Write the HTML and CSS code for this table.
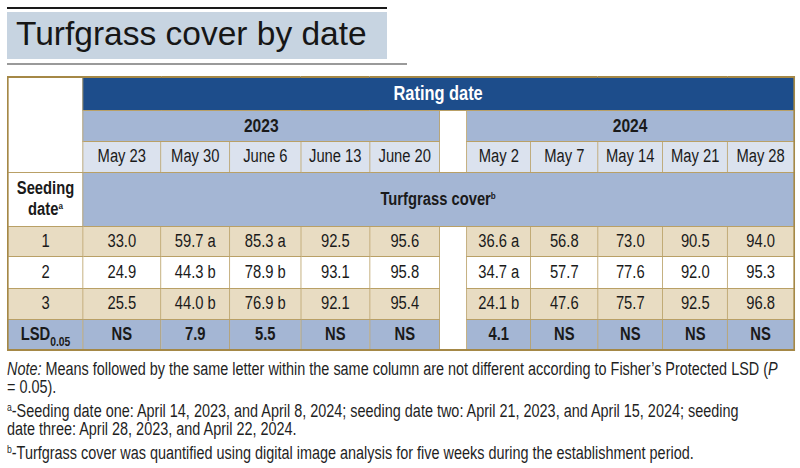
FILE: index.html
```html
<!DOCTYPE html>
<html lang="en">
<head>
<meta charset="utf-8">
<title>Turfgrass cover by date</title>
<link rel="stylesheet" href="styles.css">
</head>
<body>
<div class="page">
  <div class="rule-top"></div>
  <h1 class="title">Turfgrass cover by date</h1>
  <div class="rule-under"></div>

  <div class="narrow">
    <table class="data">
      <colgroup>
        <col class="c-label">
        <col class="c78"><col class="c69"><col class="c71"><col class="c69"><col class="c70">
        <col class="c-gap">
        <col class="c64"><col class="c67"><col class="c65"><col class="c65"><col class="c66">
      </colgroup>
      <tr class="r-rating">
        <td class="blank" rowspan="3"></td>
        <th class="rating" colspan="11">Rating date</th>
      </tr>
      <tr class="r-year">
        <th class="year" colspan="5">2023</th>
        <td class="gap" rowspan="2"></td>
        <th class="year" colspan="5">2024</th>
      </tr>
      <tr class="r-dates">
        <td>May 23</td><td>May 30</td><td>June 6</td><td>June 13</td><td>June 20</td>
        <td>May 2</td><td>May 7</td><td>May 14</td><td>May 21</td><td>May 28</td>
      </tr>
      <tr class="r-cover">
        <th class="seed">Seeding<br>date<sup>a</sup></th>
        <th class="cover" colspan="11">Turfgrass cover<sup>b</sup></th>
      </tr>
      <tr class="r-beige">
        <td>1</td><td>33.0</td><td>59.7 a</td><td>85.3 a</td><td>92.5</td><td>95.6</td>
        <td class="gap" rowspan="4"></td>
        <td>36.6 a</td><td>56.8</td><td>73.0</td><td>90.5</td><td>94.0</td>
      </tr>
      <tr class="r-white">
        <td>2</td><td>24.9</td><td>44.3 b</td><td>78.9 b</td><td>93.1</td><td>95.8</td>
        <td>34.7 a</td><td>57.7</td><td>77.6</td><td>92.0</td><td>95.3</td>
      </tr>
      <tr class="r-beige r-3">
        <td>3</td><td>25.5</td><td>44.0 b</td><td>76.9 b</td><td>92.1</td><td>95.4</td>
        <td>24.1 b</td><td>47.6</td><td>75.7</td><td>92.5</td><td>96.8</td>
      </tr>
      <tr class="r-lsd">
        <th>LSD<sub>0.05</sub></th><th>NS</th><th>7.9</th><th>5.5</th><th>NS</th><th>NS</th>
        <th>4.1</th><th>NS</th><th>NS</th><th>NS</th><th>NS</th>
      </tr>
    </table>

    <div class="notes">
      <p><em>Note:</em> Means followed by the same letter within the same column are not different according to Fisher’s Protected LSD (<em>P</em><br>= 0.05).</p>
      <p><sup>a</sup>-Seeding date one: April 14, 2023, and April 8, 2024; seeding date two: April 21, 2023, and April 15, 2024; seeding<br>date three: April 28, 2023, and April 22, 2024.</p>
      <p><sup>b</sup>-Turfgrass cover was quantified using digital image analysis for five weeks during the establishment period.</p>
    </div>
  </div>
</div>
</body>
</html>
```

FILE: styles.css
```css
* { box-sizing: border-box; }
html, body { margin: 0; padding: 0; background: #ffffff; overflow: hidden; }

.page {
  padding: 7px 0 0 7px;
  font-family: "Liberation Sans", Arial, sans-serif;
  color: #1c1c1c;
}

.rule-top {
  width: 380px;
  height: 2px;
  background: #1a1a1a;
}

.title {
  margin: 3px 0 0 0;
  width: 380px;
  height: 47px;
  padding: 0 0 4px 9px;
  background: #c7d4e1;
  font-weight: normal;
  font-size: 33.5px;
  line-height: 43px;
  color: #161616;
  letter-spacing: 0;
}

.rule-under {
  margin-top: 4px;
  width: 400px;
  height: 2px;
  background: #9a9a9a;
}

/* Arial-Narrow look: Liberation Sans squeezed horizontally */
.narrow {
  width: 958.5px;
  transform: scaleX(0.82);
  transform-origin: 0 0;
}

.data {
  margin-top: 11px;
  width: 958.5px;
  table-layout: fixed;
  border-collapse: collapse;
  border: 2px solid #a58846;
  font-size: 18px;
}

.c-label { width: 91.46px; }
.c78 { width: 95.12px; }
.c69 { width: 84.15px; }
.c71 { width: 86.59px; }
.c70 { width: 85.37px; }
.c-gap { width: 32.93px; }
.c64 { width: 78.05px; }
.c67 { width: 81.71px; }
.c65 { width: 79.27px; }
.c66 { width: 80.49px; }

.data td, .data th {
  border: 1px solid #b9a066;
  padding: 0;
  text-align: center;
  vertical-align: middle;
  white-space: nowrap;
  color: #1a1a1a;
}

.data th { font-weight: bold; }

.blank, .gap { background: #ffffff; }

.r-rating { height: 33px; }
.data .rating {
  background: #1d4d8b;
  color: #ffffff;
  font-size: 20px;
}

.r-year { height: 31px; }
.year { background: #a4b6d4; font-size: 19px; }

.r-dates { height: 31px; }
.r-dates td { background: #dbe2ee; }

.r-cover { height: 54px; }
.seed {
  background: #ffffff;
  line-height: 21px;
  font-size: 18px;
}
.cover { background: #a4b6d4; }

.r-beige { height: 30px; }
.r-beige td { background: #e8dcc2; }
.r-3 { height: 31px; }
.r-beige td.gap { background: #ffffff; }
.r-white { height: 32px; }
.r-white td { background: #ffffff; }

.r-lsd { height: 31px; }
.r-lsd th { background: #a4b6d4; }

sup {
  font-size: 0.55em;
  vertical-align: 0.6em;
  line-height: 0;
}
sub {
  font-size: 0.7em;
  vertical-align: -0.45em;
  line-height: 0;
}

.notes {
  margin-top: 9px;
  font-size: 17.6px;
  line-height: 18px;
  color: #1f1f1f;
  white-space: nowrap;
}
.notes p { margin: 0 0 6px 0; }
.notes sup { font-size: 0.6em; vertical-align: 0.55em; }
```
